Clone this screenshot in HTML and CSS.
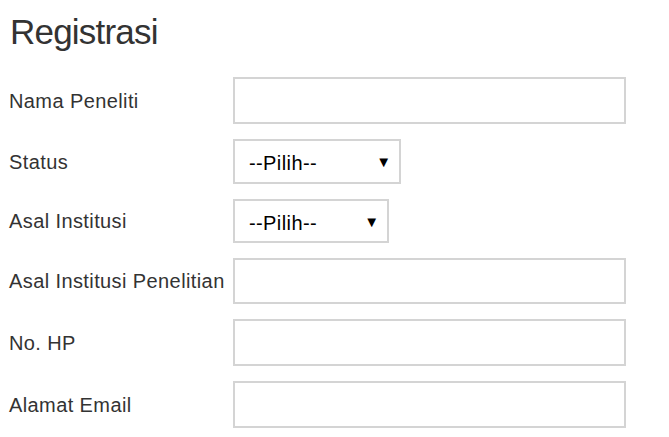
FILE: index.html
```html
<!DOCTYPE html>
<html lang="id">
<head>
  <meta charset="UTF-8" />
  <title>Registrasi</title>
  <link rel="stylesheet" href="styles.css">
</head>
<body>

  <h1 class="title">Registrasi</h1>

  <form class="reg-form">
    <label for="nama">Nama Peneliti</label>
    <input type="text" id="nama" class="field" />

    <label for="status">Status</label>
    <div class="select-wrap status">
      <select id="status">
        <option>--Pilih--</option>
      </select>
    </div>

    <label for="asal">Asal Institusi</label>
    <div class="select-wrap asal">
      <select id="asal">
        <option>--Pilih--</option>
      </select>
    </div>

    <label for="institusi">Asal Institusi Penelitian</label>
    <input type="text" id="institusi" class="field short" />

    <label for="hp">No. HP</label>
    <input type="text" id="hp" class="field" />

    <label for="email">Alamat Email</label>
    <input type="email" id="email" class="field" />
  </form>

</body>
</html>
```
FILE: styles.css
```css
* {
  margin: 0;
  padding: 0;
  box-sizing: border-box;
  font-family: 'Liberation Sans', Arial, sans-serif;
}

body {
  background: #fff;
  color: #333;
  padding: 10px 9px;
}

.title {
  font-size: 35px;
  font-weight: 400;
  line-height: 44px;
  letter-spacing: -0.8px;
  margin-left: 1px;
  margin-bottom: 23px;
}

.reg-form {
  display: grid;
  grid-template-columns: 224px 393px;
  row-gap: 15px;
  align-items: center;
}

.reg-form label {
  font-size: 20px;
  letter-spacing: 0.4px;
  padding-top: 1px;
  white-space: nowrap;
}

.field {
  width: 100%;
  height: 47px;
  border: 2px solid #d4d4d4;
  background: #fff;
}

.field.short {
  height: 46px;
}

.select-wrap {
  position: relative;
  height: 45px;
}

.select-wrap.status {
  width: 168px;
}

.select-wrap.asal {
  width: 156px;
  height: 44px;
}

.select-wrap select {
  appearance: none;
  width: 100%;
  height: 100%;
  border: 2px solid #d4d4d4;
  background: #fff;
  padding-left: 14px;
  padding-top: 3px;
  font-size: 20px;
  letter-spacing: 0.4px;
  color: #000;
}

.select-wrap::after {
  content: "\25BC";
  position: absolute;
  right: 10px;
  top: 14px;
  font-size: 15px;
  color: #000;
  pointer-events: none;
}
```
